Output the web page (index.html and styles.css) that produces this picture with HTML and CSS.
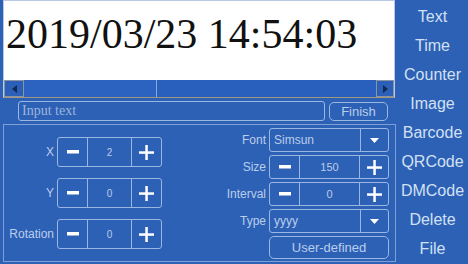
FILE: index.html
```html
<!doctype html>
<html lang="en">

<head>
    <meta charset="utf-8">
    <meta name="viewport" content="width=device-width, initial-scale=1">
    <title>Label Editor</title>
    <link rel="stylesheet" href="styles.css">
</head>

<body>
<div class="app">
    <main class="main">
        <div class="display">
            <div class="canvas">2019/03/23 14:54:03</div>
            <div class="hscroll">
                <span class="scroll-btn"><span class="arrow-left"></span></span>
                <span class="scroll-thumb"></span>
                <span class="scroll-track"></span>
                <span class="scroll-btn"><span class="arrow-right"></span></span>
            </div>
        </div>

        <div class="input-row">
            <input type="text" class="text-input" placeholder="Input text">
            <button type="button" class="btn finish">Finish</button>
        </div>

        <section class="panel">
            <div class="col col-left">
                <span class="label">X</span>
                <div class="stepper">
                    <button type="button" class="step minus"><svg width="12" height="4"><rect width="12" height="3.5" fill="#fff"/></svg></button>
                    <span class="value">2</span>
                    <button type="button" class="step plus"><svg width="15" height="15"><rect x="6.3" width="2.5" height="15" fill="#fff"/><rect y="6.3" width="15" height="2.5" fill="#fff"/></svg></button>
                </div>

                <span class="label">Y</span>
                <div class="stepper">
                    <button type="button" class="step minus"><svg width="12" height="4"><rect width="12" height="3.5" fill="#fff"/></svg></button>
                    <span class="value">0</span>
                    <button type="button" class="step plus"><svg width="15" height="15"><rect x="6.3" width="2.5" height="15" fill="#fff"/><rect y="6.3" width="15" height="2.5" fill="#fff"/></svg></button>
                </div>

                <span class="label">Rotation</span>
                <div class="stepper">
                    <button type="button" class="step minus"><svg width="12" height="4"><rect width="12" height="3.5" fill="#fff"/></svg></button>
                    <span class="value">0</span>
                    <button type="button" class="step plus"><svg width="15" height="15"><rect x="6.3" width="2.5" height="15" fill="#fff"/><rect y="6.3" width="15" height="2.5" fill="#fff"/></svg></button>
                </div>
            </div>

            <div class="col col-right">
                <span class="label">Font</span>
                <div class="select">
                    <span class="select-text">Simsun</span>
                    <span class="select-arrow"><svg width="9" height="5"><polygon points="0,0 9,0 4.5,5" fill="#fff"/></svg></span>
                </div>

                <span class="label">Size</span>
                <div class="stepper small">
                    <button type="button" class="step minus"><svg width="12" height="4"><rect width="12" height="3.5" fill="#fff"/></svg></button>
                    <span class="value">150</span>
                    <button type="button" class="step plus"><svg width="15" height="15"><rect x="6.3" width="2.5" height="15" fill="#fff"/><rect y="6.3" width="15" height="2.5" fill="#fff"/></svg></button>
                </div>

                <span class="label">Interval</span>
                <div class="stepper small">
                    <button type="button" class="step minus"><svg width="12" height="4"><rect width="12" height="3.5" fill="#fff"/></svg></button>
                    <span class="value">0</span>
                    <button type="button" class="step plus"><svg width="15" height="15"><rect x="6.3" width="2.5" height="15" fill="#fff"/><rect y="6.3" width="15" height="2.5" fill="#fff"/></svg></button>
                </div>

                <span class="label">Type</span>
                <div class="select">
                    <span class="select-text">yyyy</span>
                    <span class="select-arrow"><svg width="9" height="5"><polygon points="0,0 9,0 4.5,5" fill="#fff"/></svg></span>
                </div>

                <span></span>
                <button type="button" class="btn user-defined">User-defined</button>
            </div>
        </section>
    </main>

    <nav class="menu">
        <button type="button" class="menu-item">Text</button>
        <button type="button" class="menu-item">Time</button>
        <button type="button" class="menu-item">Counter</button>
        <button type="button" class="menu-item">Image</button>
        <button type="button" class="menu-item">Barcode</button>
        <button type="button" class="menu-item">QRCode</button>
        <button type="button" class="menu-item">DMCode</button>
        <button type="button" class="menu-item">Delete</button>
        <button type="button" class="menu-item">File</button>
    </nav>
</div>
</body>
</html>
```

FILE: styles.css
```css
:root {
    /* Colors */
    --color-bg: #2c61b5;
    --color-line: #9ab7e4;
    --color-text: #d3e0f4;
    --color-label: #bccdeb;
    --color-muted: #9fb5dc;

    /* Typography */
    --font-sans: "Liberation Sans", Arial, sans-serif;
    --font-serif: "Liberation Serif", "Times New Roman", serif;
}

*, *::before, *::after {
    box-sizing: border-box;
}

html, body {
    margin: 0;
    height: 100%;
}

body {
    background: var(--color-bg);
    font-family: var(--font-sans);
    color: var(--color-text);
    overflow: hidden;
}

button {
    font-family: inherit;
    color: inherit;
    background: transparent;
    border: none;
    padding: 0;
    cursor: pointer;
}

.app {
    display: flex;
    width: 468px;
    height: 264px;
}

.main {
    width: 397px;
    display: flex;
    flex-direction: column;
}

/* Display area */

.display {
    margin: 0 2px 0 3px;
    border: 1px solid #b9c9e2;
    border-bottom: 1px solid #a0977f;
}

.canvas {
    height: 79px;
    background: #fff;
    color: #111;
    font-family: var(--font-serif);
    font-size: 42px;
    padding: 9px 0 0 2px;
    white-space: nowrap;
    overflow: hidden;
}

.hscroll {
    display: flex;
    height: 17px;
    background: #2a60bd;
}

.scroll-btn {
    width: 20px;
    display: flex;
    align-items: center;
    justify-content: center;
    border: 1px solid #8c93a3;
    background: #2b5fb8;
}

.scroll-btn:last-child {
    width: 18px;
}

.arrow-left {
    border-top: 4px solid transparent;
    border-bottom: 4px solid transparent;
    border-right: 5px solid #102a52;
}

.arrow-right {
    border-top: 4px solid transparent;
    border-bottom: 4px solid transparent;
    border-left: 5px solid #102a52;
}

.scroll-thumb {
    width: 133px;
    background: #2c63c0;
    border-right: 1px solid #8aa6d6;
}

.scroll-track {
    flex: 1;
}

/* Input row */

.input-row {
    display: flex;
    gap: 4px;
    padding: 3px 9px 0 18px;
    height: 24px;
}

.text-input {
    width: 307px;
    height: 20px;
    background: transparent;
    border: 1px solid var(--color-line);
    border-radius: 3px;
    font-family: var(--font-serif);
    font-size: 14px;
    color: var(--color-text);
    padding: 0 3px;
    outline: none;
}

.text-input::placeholder {
    color: var(--color-muted);
}

.btn {
    border: 1px solid var(--color-line);
    border-radius: 5px;
    font-size: 13px;
    color: var(--color-label);
}

.finish {
    width: 59px;
    height: 19px;
    margin-top: 1px;
}

/* Settings panel */

.panel {
    flex: 1;
    margin: 2px 1px 2px 3px;
    border: 1px solid #7f9fd6;
    display: flex;
    justify-content: space-between;
    padding-right: 6px;
}

.col {
    display: grid;
    align-content: start;
    align-items: center;
    column-gap: 3px;
}

.col-left {
    grid-template-columns: 50px 105px;
    row-gap: 11px;
    padding-top: 12px;
}

.col-right {
    grid-template-columns: auto 120px;
    row-gap: 3px;
    padding-top: 3px;
}

.label {
    text-align: right;
    font-size: 12px;
    color: var(--color-label);
}

.stepper {
    display: grid;
    grid-template-columns: 29px 1fr 29px;
    height: 30px;
    border: 1px solid var(--color-line);
    border-radius: 3px;
}

.stepper.small {
    grid-template-columns: 29px 1fr 28px;
    height: 24px;
}

.step {
    display: flex;
    align-items: center;
    justify-content: center;
}

.value {
    display: flex;
    align-items: center;
    justify-content: center;
    font-size: 10px;
    color: var(--color-label);
    border-left: 1px solid var(--color-line);
    border-right: 1px solid var(--color-line);
}

.stepper.small .value {
    font-size: 11px;
}

.select {
    display: flex;
    height: 24px;
    border: 1px solid var(--color-line);
    border-radius: 3px;
}

.select-text {
    flex: 1;
    display: flex;
    align-items: center;
    padding-left: 4px;
    font-size: 12px;
    color: var(--color-label);
}

.select-arrow {
    width: 28px;
    display: flex;
    align-items: center;
    justify-content: center;
    border-left: 1px solid var(--color-line);
}

.user-defined {
    height: 23px;
}

/* Side menu */

.menu {
    flex: 1;
    display: flex;
    flex-direction: column;
    padding-top: 2px;
}

.menu-item {
    height: 29.2px;
    font-size: 16px;
    color: var(--color-text);
    text-align: center;
}
```
